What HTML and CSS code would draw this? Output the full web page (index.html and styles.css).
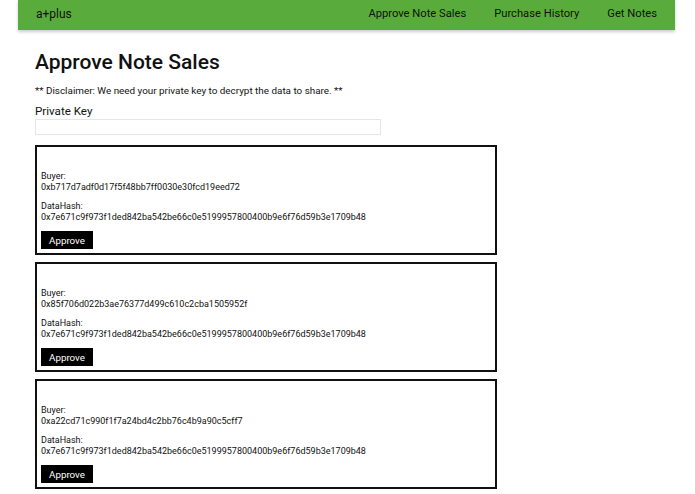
FILE: index.html
```html
<!DOCTYPE html>
<html>
<head>
<meta charset="utf-8">
<link rel="stylesheet" href="styles.css">
</head>
<body>
<nav class="navbar">
  <span class="brand">a+plus</span>
  <div class="links">
    <a>Approve Note Sales</a>
    <a>Purchase History</a>
    <a>Get Notes</a>
  </div>
</nav>
<main class="content">
  <h1>Approve Note Sales</h1>
  <p class="disclaimer">** Disclaimer: We need your private key to decrypt the data to share. **</p>
  <label class="key-label">Private Key</label>
  <input class="key-input" type="text">
  <div class="card">
    <div class="field"><div>Buyer:</div><div>0xb717d7adf0d17f5f48bb7ff0030e30fcd19eed72</div></div>
    <div class="field"><div>DataHash:</div><div>0x7e671c9f973f1ded842ba542be66c0e5199957800400b9e6f76d59b3e1709b48</div></div>
    <button class="btn">Approve</button>
  </div>
  <div class="card">
    <div class="field"><div>Buyer:</div><div>0x85f706d022b3ae76377d499c610c2cba1505952f</div></div>
    <div class="field"><div>DataHash:</div><div>0x7e671c9f973f1ded842ba542be66c0e5199957800400b9e6f76d59b3e1709b48</div></div>
    <button class="btn">Approve</button>
  </div>
  <div class="card">
    <div class="field"><div>Buyer:</div><div>0xa22cd71c990f1f7a24bd4c2bb76c4b9a90c5cff7</div></div>
    <div class="field"><div>DataHash:</div><div>0x7e671c9f973f1ded842ba542be66c0e5199957800400b9e6f76d59b3e1709b48</div></div>
    <button class="btn">Approve</button>
  </div>
</main>
</body>
</html>
```
FILE: styles.css
```css
html, body {
  margin: 0;
  padding: 0;
  background: #fff;
  font-family: Roboto, "Liberation Sans", sans-serif;
  color: #111;
}
.navbar {
  margin: 0 20px 0 18px;
  height: 30px;
  box-sizing: border-box;
  background: #59ac3c;
  display: flex;
  align-items: center;
  justify-content: space-between;
  padding: 0 18px 3px;
  box-shadow: 0 2px 3px rgba(0,0,0,0.2);
}
.brand {
  font-size: 12px;
  color: #111;
}
.links {
  display: flex;
  gap: 28px;
}
.links a {
  font-size: 11.2px;
  color: #111;
}
.content {
  padding: 0 35px;
}
h1 {
  font-size: 21px;
  font-weight: 500;
  margin: 20px 0 0;
  line-height: 24px;
}
.disclaimer {
  font-size: 9.9px;
  margin: 11px 0 0;
  line-height: 12px;
}
.key-label {
  display: block;
  font-size: 11.6px;
  margin-top: 7px;
  line-height: 15px;
}
.key-input {
  display: block;
  width: 346px;
  height: 16px;
  box-sizing: border-box;
  border: 1px solid #e6e6e6;
  margin: 0;
  padding: 0;
}
.card {
  width: 462px;
  height: 110px;
  box-sizing: border-box;
  border: 2px solid #111;
  padding: 24px 4px 0;
  margin-top: 10px;
  font-size: 9px;
  line-height: 11px;
}
.card + .card {
  margin-top: 7px;
}
.field {
  margin-bottom: 8px;
}
.btn {
  display: block;
  background: #000;
  color: #fff;
  border: none;
  font-family: Roboto, "Liberation Sans", sans-serif;
  font-size: 9.8px;
  width: 52px;
  height: 18px;
  padding: 0;
}
```
